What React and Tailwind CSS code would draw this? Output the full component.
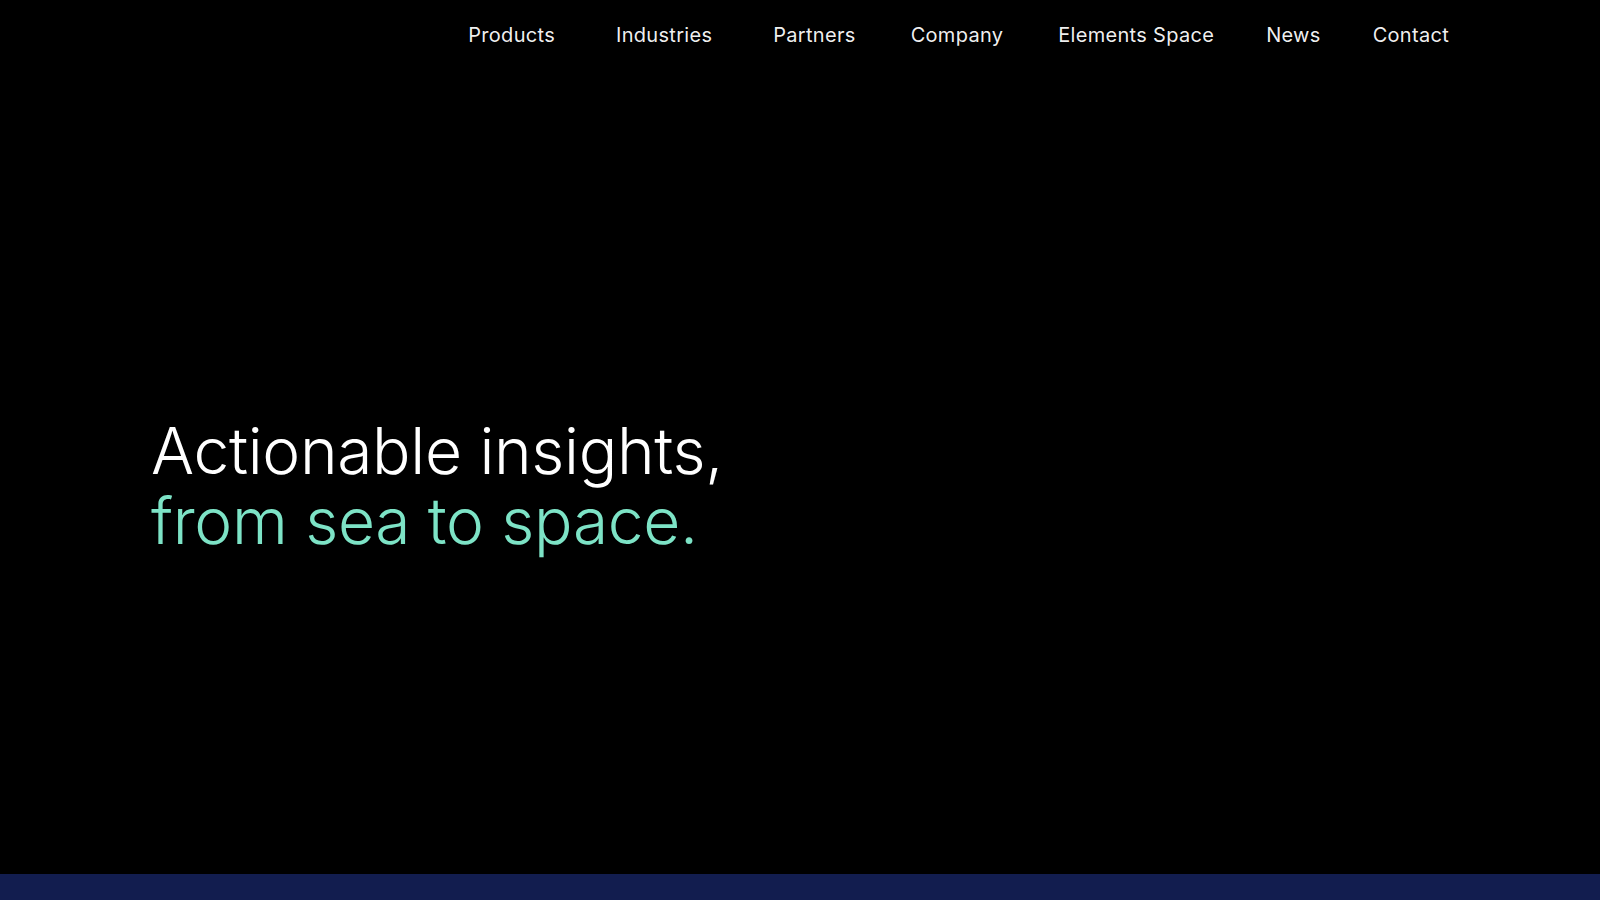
import React from 'react';

const NAV = [
  { label: 'Products', cls: 'mr-[61px]' },
  { label: 'Industries', cls: 'mr-[61px]' },
  { label: 'Partners', cls: 'mr-[55px]' },
  { label: 'Company', cls: 'mr-[55px]' },
  { label: 'Elements Space', cls: 'mr-[52px]' },
  { label: 'News', cls: 'mr-[52px]' },
  { label: 'Contact', cls: '' },
];

export default function App() {
  return (
    <div
      className="flex h-[900px] w-full flex-col overflow-hidden bg-black text-white"
      style={{ fontFamily: 'Inter, "Noto Sans", sans-serif' }}
    >
      <header className="flex h-[70px] items-center justify-end pr-[151px]">
        <nav className="flex items-center">
          {NAV.map((n) => (
            <a key={n.label} href="#" className={`text-[20px] tracking-[0.015em] text-white/95 ${n.cls}`}>
              {n.label}
            </a>
          ))}
        </nav>
      </header>

      <main className="flex flex-1 items-center pl-[151px] pt-[28px]">
        <h1 className="text-[64px] font-light leading-[70px] tracking-[-0.005em]">
          <span className="block text-white">Actionable insights,</span>
          <span className="block text-[#7de3c6]">from sea to space.</span>
        </h1>
      </main>

      <div className="h-[26px] w-full bg-[#121d4f]" />
    </div>
  );
}
